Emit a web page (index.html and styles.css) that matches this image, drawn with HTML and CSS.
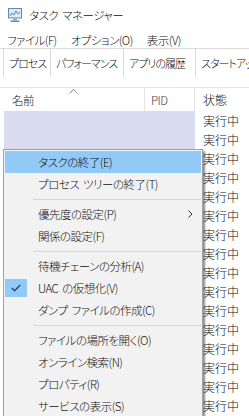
FILE: index.html
```html
<!DOCTYPE html>
<html lang="ja">
<head>
  <meta charset="UTF-8" />
  <meta name="viewport" content="width=device-width, initial-scale=1.0"/>
  <title>タスク マネージャー</title>
  <link rel="stylesheet" href="styles.css">
</head>

<body>
  <div class="window">
    <header class="titlebar">
      <svg class="app-icon" width="16" height="16" viewBox="0 0 16 16">
        <rect x="1.5" y="1.5" width="13" height="9.5" fill="#dde9f4" stroke="#6b87a6"/>
        <path d="M3 9 L5 6 L7 8 L9 4 L11 7 L13 5" fill="none" stroke="#3c8fd0" stroke-width="1"/>
        <rect x="6" y="11.5" width="4" height="2" fill="#9aa9ba"/>
        <rect x="3.5" y="13.5" width="9" height="1.5" fill="#6b87a6"/>
      </svg>
      <span>タスク マネージャー</span>
    </header>

    <nav class="menubar">
      <span class="menubar-item">ファイル(F)</span>
      <span class="menubar-item">オプション(O)</span>
      <span class="menubar-item">表示(V)</span>
    </nav>

    <div class="tabs">
      <div class="tab tab-process active">プロセス</div>
      <div class="tab tab-perf">パフォーマンス</div>
      <div class="tab tab-history">アプリの履歴</div>
      <div class="tab tab-startup">スタートアップ</div>
    </div>

    <div class="list">
      <div class="list-head">
        <div class="cell name">
          名前
          <svg class="sort" width="9" height="5" viewBox="0 0 9 5">
            <polyline points="0.5,4.5 4.5,0.5 8.5,4.5" fill="none" stroke="#8c8c8c" stroke-width="1"/>
          </svg>
        </div>
        <div class="cell pid">PID</div>
        <div class="cell status">状態</div>
      </div>
      <div class="row selected"><div class="cell name"></div><div class="cell pid"></div><div class="cell status">実行中</div></div>
      <div class="row selected"><div class="cell name"></div><div class="cell pid"></div><div class="cell status">実行中</div></div>
      <div class="row"><div class="cell name"></div><div class="cell pid"></div><div class="cell status">実行中</div></div>
      <div class="row"><div class="cell name"></div><div class="cell pid"></div><div class="cell status">実行中</div></div>
      <div class="row"><div class="cell name"></div><div class="cell pid"></div><div class="cell status">実行中</div></div>
      <div class="row"><div class="cell name"></div><div class="cell pid"></div><div class="cell status">実行中</div></div>
      <div class="row"><div class="cell name"></div><div class="cell pid"></div><div class="cell status">実行中</div></div>
      <div class="row"><div class="cell name"></div><div class="cell pid"></div><div class="cell status">実行中</div></div>
      <div class="row"><div class="cell name"></div><div class="cell pid"></div><div class="cell status">実行中</div></div>
      <div class="row"><div class="cell name"></div><div class="cell pid"></div><div class="cell status">実行中</div></div>
      <div class="row"><div class="cell name"></div><div class="cell pid"></div><div class="cell status">実行中</div></div>
      <div class="row"><div class="cell name"></div><div class="cell pid"></div><div class="cell status">実行中</div></div>
      <div class="row"><div class="cell name"></div><div class="cell pid"></div><div class="cell status">実行中</div></div>
      <div class="row"><div class="cell name"></div><div class="cell pid"></div><div class="cell status">実行中</div></div>
      <div class="row"><div class="cell name"></div><div class="cell pid"></div><div class="cell status">実行中</div></div>
      <div class="row"><div class="cell name"></div><div class="cell pid"></div><div class="cell status">実行中</div></div>
    </div>

    <!-- right-click menu over the process list -->
    <div class="context-menu">
      <div class="menu-item hot"><span>タスクの終了(E)</span></div>
      <div class="menu-item"><span>プロセス ツリーの終了(T)</span></div>
      <div class="menu-sep"></div>
      <div class="menu-item"><span>優先度の設定(P)</span><svg class="submenu" width="5" height="8" viewBox="0 0 5 8"><polyline points="0.5,0.5 4,4 0.5,7.5" fill="none" stroke="#333" stroke-width="1"/></svg></div>
      <div class="menu-item"><span>関係の設定(F)</span></div>
      <div class="menu-sep"></div>
      <div class="menu-item"><span>待機チェーンの分析(A)</span></div>
      <div class="menu-item"><span class="check"><svg width="10" height="8" viewBox="0 0 10 8"><polyline points="0.8,4 3.6,6.8 9.2,1" fill="none" stroke="#1f4e7a" stroke-width="1.4"/></svg></span><span>UAC の仮想化(V)</span></div>
      <div class="menu-item"><span>ダンプ ファイルの作成(C)</span></div>
      <div class="menu-sep"></div>
      <div class="menu-item"><span>ファイルの場所を開く(O)</span></div>
      <div class="menu-item"><span>オンライン検索(N)</span></div>
      <div class="menu-item"><span>プロパティ(R)</span></div>
      <div class="menu-item"><span>サービスの表示(S)</span></div>
    </div>
  </div>
</body>
</html>
```

FILE: styles.css
```css
body {
  margin: 0;
  padding: 0;
  background-color: #ffffff;
  color: #111;
  font-family: "Noto Sans CJK JP", sans-serif;
  font-size: 11.5px;
  font-weight: 300;
  letter-spacing: -0.5px;
  word-spacing: 2px;
  font-feature-settings: "palt";
}

.window {
  position: relative;
  width: 249px;
  height: 416px;
  overflow: hidden;
}

.titlebar {
  height: 29px;
  display: flex;
  align-items: center;
  gap: 6px;
  padding-left: 7px;
  line-height: 16px;
}

.menubar {
  height: 16px;
  padding-top: 3px;
  display: flex;
  align-items: center;
  line-height: 16px;
}

.menubar-item {
  padding: 0 7px;
}

.tabs {
  height: 28px;
  display: flex;
  border-top: 1px solid #dadada;
  line-height: 16px;
  font-size: 11px;
  letter-spacing: -1px;
}

.tab {
  flex: none;
  box-sizing: border-box;
  display: flex;
  align-items: center;
  padding-left: 5px;
  border-right: 1px solid #dadada;
  white-space: nowrap;
  overflow: hidden;
}

.tab-process {
  width: 48px;
  margin-left: 3px;
  border-left: 1px solid #dadada;
}

.tab-perf {
  width: 73px;
}

.tab-history {
  width: 72px;
}

.tab-startup {
  flex: 1;
  min-width: 0;
  border-right: none;
}

.list {
  margin-top: 10px;
  padding-left: 4px;
  border-top: 1px solid #e5e5e5;
}

.list-head,
.row {
  display: grid;
  grid-template-columns: 141px 50px 54px;
}

.list-head {
  height: 23px;
}

.row {
  height: 19px;
}

.cell {
  display: flex;
  align-items: center;
  line-height: 16px;
  white-space: nowrap;
}

.list-head .name,
.list-head .pid {
  border-right: 1px solid #e5e5e5;
}

.list-head .name {
  position: relative;
  padding-left: 8px;
}

.list-head .pid {
  padding-left: 6px;
  color: #3c3c3c;
}

.cell.status {
  padding-left: 8px;
  font-size: 12px;
  letter-spacing: 0;
}

.sort {
  position: absolute;
  top: 1px;
  left: 65px;
}

.row.selected .name,
.row.selected .pid {
  background-color: #d9dcf0;
}

.context-menu {
  position: absolute;
  top: 149px;
  left: 3px;
  width: 200px;
  height: 280px;
  box-sizing: border-box;
  padding: 1px;
  background-color: #f2f2f2;
  border: 1px solid #a0a0a0;
  box-shadow: 2px 2px 2px rgba(0, 0, 0, 0.45);
}

.menu-item {
  position: relative;
  height: 22px;
  display: flex;
  align-items: center;
  padding-left: 33px;
  line-height: 16px;
  white-space: nowrap;
}

.menu-item.hot {
  background-color: #91c9f7;
}

.menu-sep {
  height: 8px;
  display: flex;
  align-items: center;
  padding-left: 28px;
}

.menu-sep::after {
  content: "";
  flex: 1;
  height: 1px;
  background-color: #d7d7d7;
}

.submenu {
  position: absolute;
  right: 8px;
  top: 7px;
}

.check {
  position: absolute;
  left: 0;
  top: 2px;
  width: 22px;
  height: 18px;
  display: flex;
  align-items: center;
  justify-content: center;
  background-color: #91c9f7;
}
```
